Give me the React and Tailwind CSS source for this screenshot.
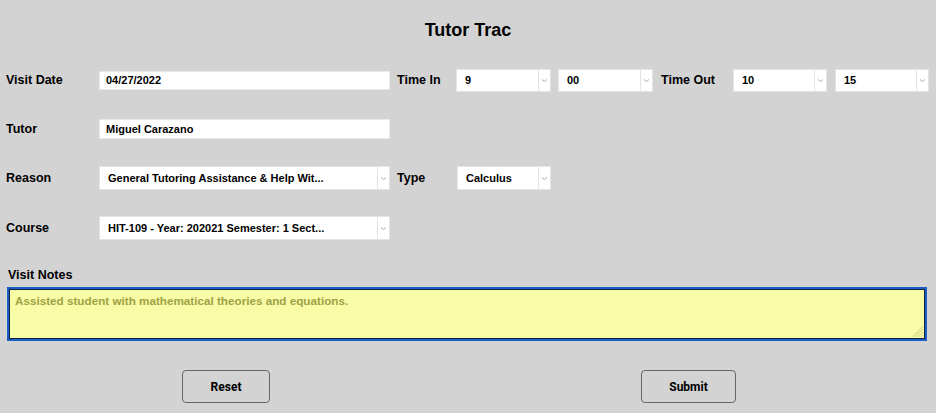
import React from "react";

const F = { fontFamily: '"Liberation Sans", Arial, sans-serif' };

function Chevron() {
  return (
    <svg width="7" height="5" viewBox="0 0 7 5" fill="none">
      <path d="M1 1.5 L3.5 3.5 L6 1.5" stroke="#a8a8a8" strokeWidth="1" />
    </svg>
  );
}

function Select({ value, w, h = "h-[23px]" }) {
  return (
    <div className={`flex ${w} ${h} bg-white border border-[#e4e4e4]`}>
      <div className="flex-1 flex items-center pl-[8px] text-[11px] font-bold text-black whitespace-nowrap overflow-hidden">
        {value}
      </div>
      <div className="w-[12px] border-l border-[#e4e4e4] flex items-center justify-center">
        <Chevron />
      </div>
    </div>
  );
}

function Label({ children, w }) {
  return (
    <div className={`${w} text-[12.5px] font-bold text-black whitespace-nowrap`}>{children}</div>
  );
}

export default function App() {
  return (
    <div className="w-[936px] h-[413px] bg-[#d3d3d3] overflow-hidden" style={F}>
      <div className="h-[60px] flex items-center justify-center text-[18px] font-bold text-black">
        Tutor Trac
      </div>

      {/* Row 1 */}
      <div className="mt-[8px] h-[24px] flex items-center pl-[6px]">
        <Label w="w-[93px]">Visit Date</Label>
        <div className="w-[291px] h-[19px] bg-white border border-[#e8e8e8] flex items-center pl-[6px] text-[11px] font-bold">
          04/27/2022
        </div>
        <div className="ml-[7px]"><Label w="w-[59px]">Time In</Label></div>
        <Select value="9" w="w-[95px]" />
        <div className="ml-[7px]"><Select value="00" w="w-[95px]" /></div>
        <div className="ml-[8px]"><Label w="w-[72px]">Time Out</Label></div>
        <Select value="10" w="w-[94px]" />
        <div className="ml-[8px]"><Select value="15" w="w-[94px]" /></div>
      </div>

      {/* Row 2 */}
      <div className="mt-[25px] h-[24px] flex items-center pl-[6px]">
        <Label w="w-[93px]">Tutor</Label>
        <div className="w-[291px] h-[20px] bg-white border border-[#e8e8e8] flex items-center pl-[6px] text-[11px] font-bold">
          Miguel Carazano
        </div>
      </div>

      {/* Row 3 */}
      <div className="mt-[25px] h-[24px] flex items-center pl-[6px]">
        <Label w="w-[93px]">Reason</Label>
        <Select value="General Tutoring Assistance & Help Wit..." w="w-[291px]" h="h-[24px]" />
        <div className="ml-[7px]"><Label w="w-[60px]">Type</Label></div>
        <Select value="Calculus" w="w-[94px]" h="h-[24px]" />
      </div>

      {/* Row 4 */}
      <div className="mt-[26px] h-[24px] flex items-center pl-[6px]">
        <Label w="w-[93px]">Course</Label>
        <Select value="HIT-109 - Year: 202021 Semester: 1 Sect..." w="w-[291px]" h="h-[24px]" />
      </div>

      {/* Visit Notes */}
      <div className="mt-[27px] h-[16px] flex items-center pl-[8px]">
        <Label w="w-auto">Visit Notes</Label>
      </div>
      <div className="mt-[4px] ml-[7px] w-[920px] h-[54px] relative bg-[#f8fca6] border-2 border-[#1b5fc6] shadow-[inset_0_0_0_1px_#10203f] pl-[6px] pt-[3px] text-[11.7px] font-bold text-[#a0a244]">
        Assisted student with mathematical theories and equations.
        <svg className="absolute right-[1px] bottom-[1px]" width="12" height="12" viewBox="0 0 12 12">
          <path d="M11 3 L3 11 M11 6 L6 11 M11 9 L9 11 M11 0.5 L0.5 11" stroke="#c9c983" strokeWidth="1" />
        </svg>
      </div>

      {/* Buttons */}
      <div className="mt-[29px] flex">
        <div className="ml-[182px] w-[88px] h-[33px] border border-[#666] rounded-[4px] flex items-center justify-center text-[12px] font-bold text-black" style={{ fontFamily: 'Roboto, "Liberation Sans", sans-serif' }}>
          Reset
        </div>
        <div className="ml-[371px] w-[95px] h-[33px] border border-[#666] rounded-[4px] flex items-center justify-center text-[12px] font-bold text-black" style={{ fontFamily: 'Roboto, "Liberation Sans", sans-serif' }}>
          Submit
        </div>
      </div>
    </div>
  );
}
